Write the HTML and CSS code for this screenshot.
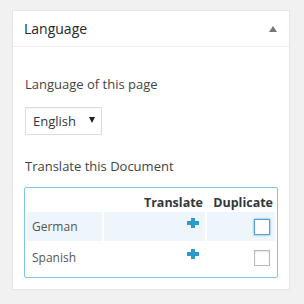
FILE: index.html
```html
<!DOCTYPE html>
<html lang="en">
<head>
    <meta charset="UTF-8">
    <title>Language</title>
    <link rel="stylesheet" href="styles.css">
</head>
<body>
    <div class="postbox">
        <div class="postbox-header">
            <h2>Language</h2>
            <span class="toggle-arrow"></span>
        </div>
        <div class="inside">
            <p class="field-label">Language of this page</p>
            <div class="select-wrap">
                <select class="lang-select">
                    <option>English</option>
                    <option>German</option>
                    <option>Spanish</option>
                </select>
            </div>
            <p class="field-label translate-label">Translate this Document</p>
            <div class="translations">
                <div class="cell head"></div>
                <div class="cell head right">Translate</div>
                <div class="cell head right">Duplicate</div>

                <div class="cell alt">German</div>
                <div class="cell alt right add">
                    <svg class="plus" width="12" height="10" viewBox="0 0 12 10"><rect x="4" y="0" width="4" height="10"/><rect x="0" y="3" width="12" height="4"/></svg>
                </div>
                <div class="cell alt right dup"><span class="checkbox focused"></span></div>

                <div class="cell">Spanish</div>
                <div class="cell right add">
                    <svg class="plus" width="12" height="10" viewBox="0 0 12 10"><rect x="4" y="0" width="4" height="10"/><rect x="0" y="3" width="12" height="4"/></svg>
                </div>
                <div class="cell right dup"><span class="checkbox"></span></div>
            </div>
        </div>
    </div>
</body>
</html>
```

FILE: styles.css
```css
body {
    margin: 0;
    padding: 10px 14px 0 12px;
    background-color: #f1f1f1;
    font-family: 'Open Sans', sans-serif;
    color: #444;
}

.postbox {
    width: 276px;
    background-color: #fff;
    border: 1px solid #e5e5e5;
    box-shadow: 0 1px 1px rgba(0, 0, 0, 0.04);
}

.postbox-header {
    height: 35px;
    border-bottom: 1px solid #eee;
    display: flex;
    align-items: center;
    justify-content: space-between;
    padding: 0 12px 0 11px;
}

.postbox-header h2 {
    margin: 0;
    font-size: 14px;
    font-weight: 400;
    color: #23282d;
}

.toggle-arrow {
    width: 0;
    height: 0;
    border-left: 4px solid transparent;
    border-right: 4px solid transparent;
    border-bottom: 6px solid #72777c;
    margin-top: 1px;
}

.inside {
    padding: 28px 12px 11px 12px;
}

.field-label {
    margin: 0;
    font-size: 13px;
    line-height: 18px;
    color: #444;
}

.select-wrap {
    position: relative;
    width: 77px;
    margin-top: 14px;
}

.select-wrap::after {
    content: "";
    position: absolute;
    right: 7px;
    top: 10px;
    border-left: 3.5px solid transparent;
    border-right: 3.5px solid transparent;
    border-top: 6px solid #222;
    pointer-events: none;
}

.lang-select {
    appearance: none;
    -webkit-appearance: none;
    display: block;
    width: 77px;
    height: 28px;
    padding: 0 0 0 7px;
    border: 1px solid #ddd;
    border-radius: 0;
    background-color: #fff;
    font-family: 'Open Sans', sans-serif;
    font-size: 13px;
    color: #32373c;
    box-shadow: inset 0 1px 2px rgba(0, 0, 0, 0.04);
}

.translate-label {
    margin-top: 22px;
}

.translations {
    box-sizing: border-box;
    margin: 12px 0 0 -1px;
    width: 254px;
    border: 1px solid #7ec6ea;
    border-radius: 2px;
    padding: 2px 2px 5px 2px;
    display: grid;
    grid-template-columns: 75px 101px 68px;
    grid-template-rows: 20px 29px 29px;
    gap: 2px;
}

.cell {
    display: flex;
    align-items: center;
    padding-left: 5px;
    font-size: 12px;
    color: #555;
}

.cell.right {
    justify-content: flex-end;
    padding-left: 0;
}

.cell.head {
    align-items: flex-end;
    padding-right: 2px;
    font-size: 12.5px;
    font-weight: 700;
    line-height: 15px;
    color: #32373c;
}

.cell.alt {
    background-color: #eef6fc;
}

.cell.add {
    padding-right: 6px;
    align-items: flex-start;
    padding-top: 6px;
}

.cell.dup {
    padding-right: 5px;
}

.plus {
    fill: #2c9acb;
    display: block;
}

.checkbox {
    display: block;
    width: 14px;
    height: 14px;
    border: 1px solid #b4b9be;
    background-color: #fff;
    box-shadow: inset 0 1px 2px rgba(0, 0, 0, 0.1);
}

.checkbox.focused {
    border-color: #5b9dd9;
    box-shadow: 0 0 2px rgba(30, 140, 190, 0.8);
}
```
